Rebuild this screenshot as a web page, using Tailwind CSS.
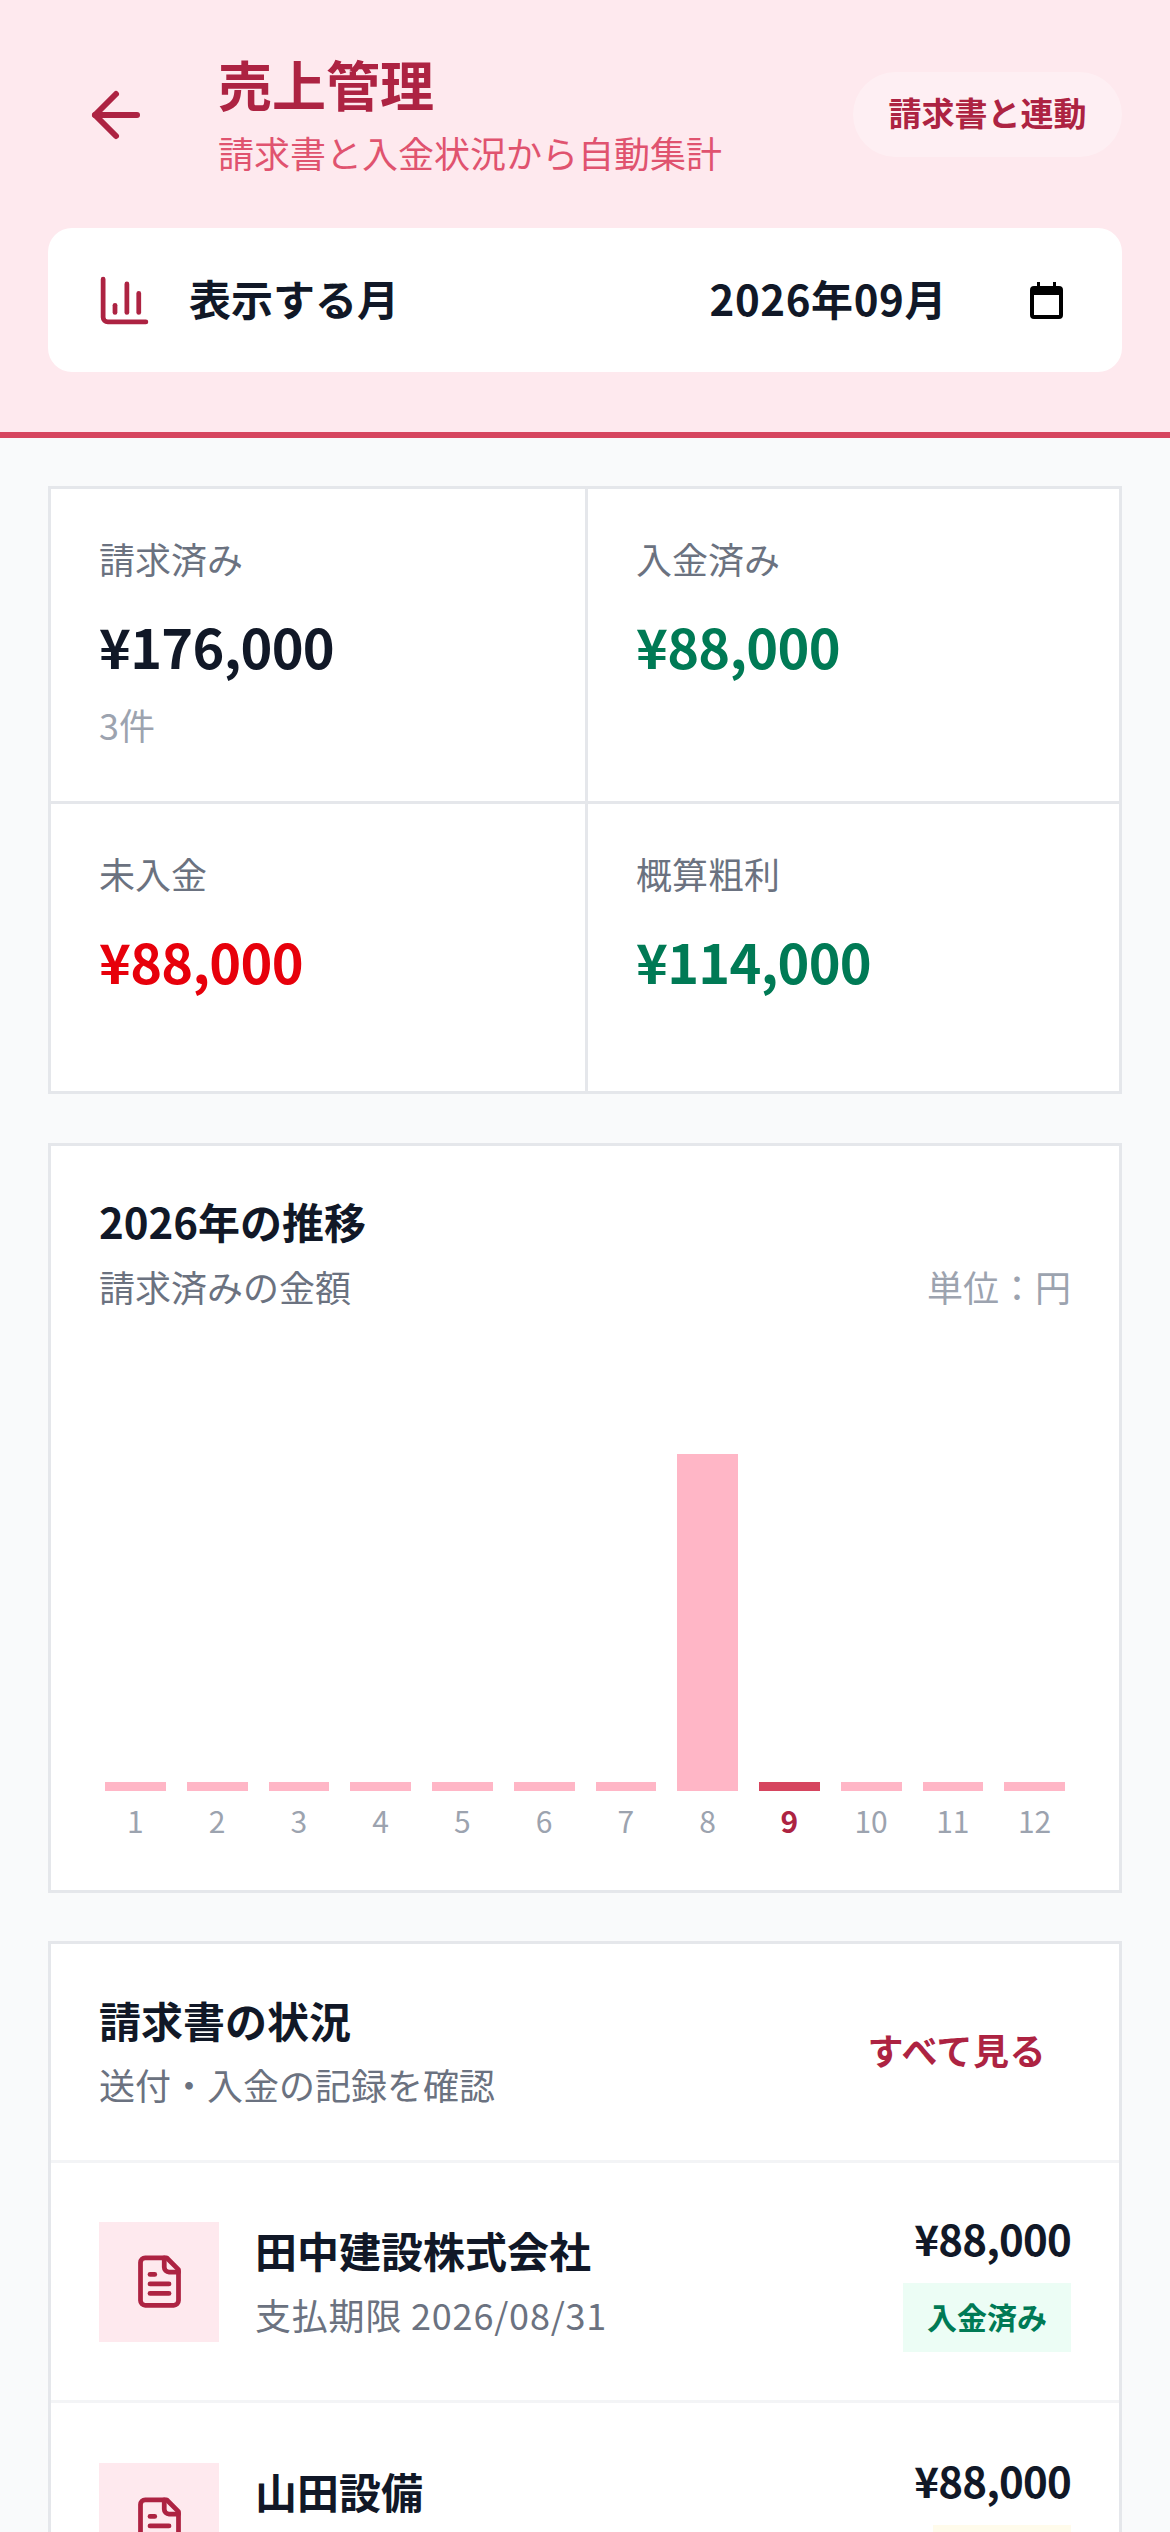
<!DOCTYPE html>
<html lang="ja">
<head>
    <meta charset="UTF-8">
    <meta name="viewport" content="width=device-width, initial-scale=1.0">
    <title>売上管理</title>
    <script src="https://cdn.jsdelivr.net/npm/@tailwindcss/browser@4"></script>
</head>
<body class="bg-[#f9fafb] font-['Noto_Sans_CJK_JP',sans-serif] text-[#111827]">
<div class="h-[2532px] overflow-hidden">

    <!-- Header -->
    <header class="h-[438px] bg-[#fee9ee] border-b-[6px] border-[#d6455f] px-[48px] pt-[51px]">
        <div class="flex items-center">
            <svg class="w-[72px] h-[72px] ml-[32px] mr-[66px] shrink-0" viewBox="0 0 24 24" fill="none" stroke="#ad2342" stroke-width="2" stroke-linecap="round" stroke-linejoin="round"><path d="m12 19-7-7 7-7"/><path d="M19 12H5"/></svg>
            <div class="flex-1 pb-[2px]">
                <h1 class="text-[54px] leading-[66px] font-bold text-[#ad2342]">売上管理</h1>
                <p class="text-[36px] leading-[48px] mt-[11px] text-[#e0536f]">請求書と入金状況から自動集計</p>
            </div>
            <button class="w-[269px] h-[85px] pb-[3px] rounded-full bg-white/30 text-[33px] font-bold text-[#ad2342]">請求書と連動</button>
        </div>
        <div class="flex items-center h-[144px] mt-[50px] bg-white rounded-[24px] pl-[48px] pr-[59px]">
            <svg class="w-[57px] h-[57px] shrink-0" viewBox="0 0 24 24" fill="none" stroke="#ad2342" stroke-width="2" stroke-linecap="round" stroke-linejoin="round"><path d="M3 3v16a2 2 0 0 0 2 2h16"/><path d="M18 17V9"/><path d="M13 17V5"/><path d="M8 17v-3"/></svg>
            <span class="ml-[36px] pb-[6px] text-[42px] font-bold">表示する月</span>
            <span class="ml-auto pb-[6px] text-[42px] font-bold tracking-[0.6px]">2026年09月</span>
            <svg class="w-[33px] h-[37px] ml-[83px] shrink-0" viewBox="0 0 33 37" fill="#000"><path d="M7 0h3v4h13V0h3v4h3a4 4 0 0 1 4 4v25a4 4 0 0 1-4 4H4a4 4 0 0 1-4-4V8a4 4 0 0 1 4-4h3zM4 13v20h25V13z" fill-rule="evenodd"/></svg>
        </div>
    </header>

    <main class="px-[48px] pt-[48px]">

        <!-- Summary -->
        <section class="grid grid-cols-[534px_531px] gap-[3px] bg-[#e5e7eb] border-[3px] border-[#e5e7eb]">
            <div class="h-[312px] bg-white px-[48px] pt-[45px]">
                <p class="text-[36px] leading-[48px] text-[#6b7280]">請求済み</p>
                <p class="text-[54px] leading-[84px] mt-[22px] font-bold tracking-[-0.7px]">¥176,000</p>
                <p class="text-[36px] leading-[48px] mt-[12px] text-[#9ca3af]">3件</p>
            </div>
            <div class="h-[312px] bg-white px-[48px] pt-[45px]">
                <p class="text-[36px] leading-[48px] text-[#6b7280]">入金済み</p>
                <p class="text-[54px] leading-[84px] mt-[22px] font-bold tracking-[-0.7px] text-[#007a55]">¥88,000</p>
            </div>
            <div class="h-[287px] bg-white px-[48px] pt-[45px]">
                <p class="text-[36px] leading-[48px] text-[#6b7280]">未入金</p>
                <p class="text-[54px] leading-[84px] mt-[22px] font-bold tracking-[-0.7px] text-[#e7000b]">¥88,000</p>
            </div>
            <div class="h-[287px] bg-white px-[48px] pt-[45px]">
                <p class="text-[36px] leading-[48px] text-[#6b7280]">概算粗利</p>
                <p class="text-[54px] leading-[84px] mt-[22px] font-bold tracking-[-0.7px] text-[#007a55]">¥114,000</p>
            </div>
        </section>

        <!-- Chart -->
        <section class="h-[750px] mt-[49px] bg-white border-[3px] border-[#e5e7eb] px-[48px] pt-[45px]">
            <h2 class="text-[42px] leading-[60px] font-bold">2026年の推移</h2>
            <div class="flex justify-between mt-[11px] text-[36px] leading-[48px]">
                <span class="text-[#6b7280]">請求済みの金額</span>
                <span class="text-[#9ca3af]">単位：円</span>
            </div>
            <div class="flex items-end gap-[21px] px-[6px] h-[531px] text-[30px] leading-[42px] text-[#9ca3af] text-center">
                <div class="flex-1"><div class="h-[9px] bg-[#ffb6c6]"></div><p class="mt-[8px]">1</p></div>
                <div class="flex-1"><div class="h-[9px] bg-[#ffb6c6]"></div><p class="mt-[8px]">2</p></div>
                <div class="flex-1"><div class="h-[9px] bg-[#ffb6c6]"></div><p class="mt-[8px]">3</p></div>
                <div class="flex-1"><div class="h-[9px] bg-[#ffb6c6]"></div><p class="mt-[8px]">4</p></div>
                <div class="flex-1"><div class="h-[9px] bg-[#ffb6c6]"></div><p class="mt-[8px]">5</p></div>
                <div class="flex-1"><div class="h-[9px] bg-[#ffb6c6]"></div><p class="mt-[8px]">6</p></div>
                <div class="flex-1"><div class="h-[9px] bg-[#ffb6c6]"></div><p class="mt-[8px]">7</p></div>
                <div class="flex-1"><div class="h-[337px] bg-[#ffb6c6]"></div><p class="mt-[8px]">8</p></div>
                <div class="flex-1"><div class="h-[9px] bg-[#d6455f]"></div><p class="mt-[8px] font-bold text-[#ad2342]">9</p></div>
                <div class="flex-1"><div class="h-[9px] bg-[#ffb6c6]"></div><p class="mt-[8px]">10</p></div>
                <div class="flex-1"><div class="h-[9px] bg-[#ffb6c6]"></div><p class="mt-[8px]">11</p></div>
                <div class="flex-1"><div class="h-[9px] bg-[#ffb6c6]"></div><p class="mt-[8px]">12</p></div>
            </div>
        </section>

        <!-- Invoices -->
        <section class="mt-[48px] bg-white border-[3px] border-[#e5e7eb]">
            <div class="flex items-center justify-between h-[219px] pb-[6px] border-b-[3px] border-[#f3f4f6] px-[48px]">
                <div>
                    <h2 class="text-[42px] leading-[60px] font-bold">請求書の状況</h2>
                    <p class="text-[36px] leading-[48px] mt-[10px] text-[#6b7280]">送付・入金の記録を確認</p>
                </div>
                <button class="px-[25px] text-[36px] font-bold tracking-[0.5px] text-[#ad2342]">すべて見る</button>
            </div>

            <div class="flex items-center gap-[36px] h-[240px] border-b-[3px] border-[#f3f4f6] px-[48px]">
                <div class="flex items-center justify-center w-[120px] h-[120px] bg-[#fee9ee] shrink-0">
                    <svg class="w-[57px] h-[57px]" viewBox="0 0 24 24" fill="none" stroke="#ad2342" stroke-width="2" stroke-linecap="round" stroke-linejoin="round"><path d="M15 2H6a2 2 0 0 0-2 2v16a2 2 0 0 0 2 2h12a2 2 0 0 0 2-2V7Z"/><path d="M14 2v4a2 2 0 0 0 2 2h4"/><path d="M10 9H8"/><path d="M16 13H8"/><path d="M16 17H8"/></svg>
                </div>
                <div class="flex-1 pb-[3px]">
                    <p class="text-[42px] leading-[60px] font-bold">田中建設株式会社</p>
                    <p class="text-[36px] leading-[54px] mt-[7px] tracking-[0.8px] text-[#6b7280]">支払期限 2026/08/31</p>
                </div>
                <div class="flex flex-col items-end">
                    <p class="text-[42px] leading-[54px] font-bold tracking-[-0.8px]">¥88,000</p>
                    <span class="mt-[18px] px-[24px] pb-[3px] text-[30px] leading-[66px] font-bold text-[#007a55] bg-[#ecfdf5]">入金済み</span>
                </div>
            </div>

            <div class="flex items-center gap-[36px] h-[240px] px-[48px]">
                <div class="flex items-center justify-center w-[120px] h-[120px] bg-[#fee9ee] shrink-0">
                    <svg class="w-[57px] h-[57px]" viewBox="0 0 24 24" fill="none" stroke="#ad2342" stroke-width="2" stroke-linecap="round" stroke-linejoin="round"><path d="M15 2H6a2 2 0 0 0-2 2v16a2 2 0 0 0 2 2h12a2 2 0 0 0 2-2V7Z"/><path d="M14 2v4a2 2 0 0 0 2 2h4"/><path d="M10 9H8"/><path d="M16 13H8"/><path d="M16 17H8"/></svg>
                </div>
                <div class="flex-1 pb-[3px]">
                    <p class="text-[42px] leading-[60px] font-bold">山田設備</p>
                    <p class="text-[36px] leading-[54px] mt-[7px] tracking-[0.8px] text-[#6b7280]">支払期限 2026/09/30</p>
                </div>
                <div class="flex flex-col items-end">
                    <p class="text-[42px] leading-[54px] font-bold tracking-[-0.8px]">¥88,000</p>
                    <span class="mt-[18px] px-[24px] pb-[3px] text-[30px] leading-[66px] font-bold text-[#bb4d00] bg-[#fffbeb]">未入金</span>
                </div>
            </div>
        </section>
    </main>
</div>
</body>
</html>
